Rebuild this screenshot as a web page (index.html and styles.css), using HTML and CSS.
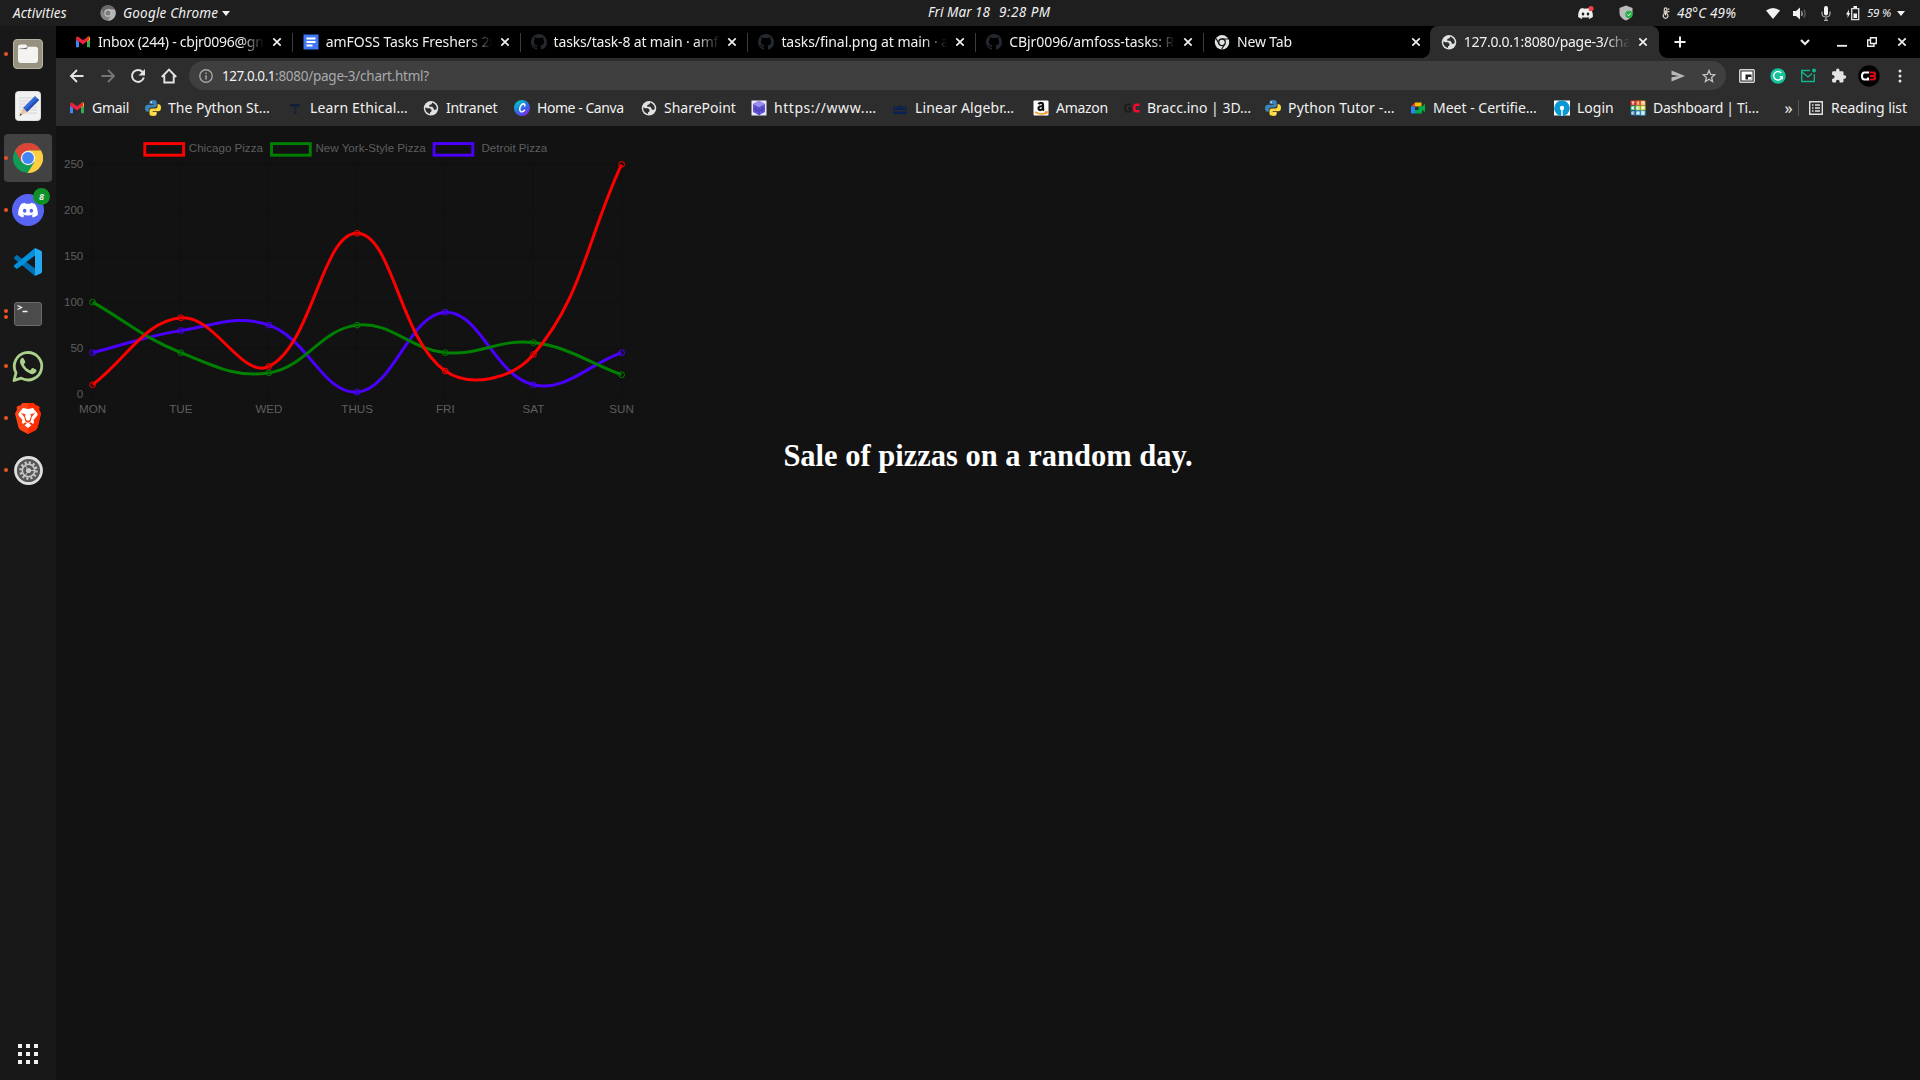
FILE: index.html
```html
<!DOCTYPE html>
<html lang="en">
<head>
<meta charset="utf-8">
<title>127.0.0.1:8080/page-3/chart.html</title>
<link rel="stylesheet" href="styles.css">
</head>
<body>
<svg class="sprite" aria-hidden="true">
  <symbol id="gmail" viewBox="0 0 16 16"><path fill="#4285f4" d="M1 4v9.200h3V7z"/><path fill="#34a853" d="M12 7v6.200h3V4z"/><path fill="#fbbc04" d="M12 4.300V8l3-2.300V4c0-1.600-1.600-2-2.600-1.100z"/><path fill="#c5221f" d="M1 4v1.700L4 8V4.200L3.500 2.900C2.400 2.100 1 2.600 1 4z"/><path fill="#ea233f" d="M3.500 2.900 8 6.300l4.500-3.400L14 3v2.700L8 10.500 2 6V3z"/></symbol>
  <symbol id="python" viewBox="0 0 16 16"><path fill="#3c84ba" d="M8 0C5 0 4.500 1 4.500 2.200V4h4v.7H2.600C1 4.700 0 6 0 8.200s1 3.600 2.500 3.600h1.300V9.700c0-1.200 1-2.200 2.300-2.200h3.800c1 0 1.800-.9 1.800-1.900V2.200C11.700.8 10.500 0 8 0z"/><path fill="#ffd83c" d="M8.200 16c3 0 3.500-1 3.500-2.200V12h-4v-.7h5.900C15.200 11.300 16 10 16 7.800s-.8-3.600-2.300-3.600h-1.200v2c0 1.300-1 2.300-2.200 2.300H6.400c-1.100 0-1.900.9-1.900 2v3.300C4.500 15.200 5.700 16 8.200 16z"/><circle cx="6.200" cy="2.200" r=".8" fill="#fff"/><circle cx="10" cy="13.800" r=".8" fill="#fff"/></symbol>
  <symbol id="globe" viewBox="0 0 16 16"><circle cx="8" cy="8.300" r="7.200" fill="#dfe1e3"/><path fill="#2d2d2d" d="M9.300 2.500 8.500 4.300 6.300 5v1.700h2.900l1.300 1.500.3 1.600h1.700l1.200-.8q.5-4.500-4.400-6.500zM2.400 7.300 2.300 9.600q.8 3.500 4.700 4.300v-1.500l1.500-1.200V9.700L7 8.300H4.300z"/></symbol>
  <symbol id="github" viewBox="0 0 16 16"><path fill="#24292f" d="M8 0C3.580 0 0 3.580 0 8c0 3.540 2.290 6.530 5.470 7.590.4.070.55-.17.55-.38 0-.19-.01-.82-.01-1.490-2.010.37-2.530-.49-2.690-.94-.09-.23-.48-.94-.82-1.130-.28-.15-.68-.52-.01-.53.63-.01 1.080.58 1.230.82.72 1.210 1.870.87 2.330.66.070-.52.28-.87.51-1.070-1.780-.2-3.640-.89-3.640-3.950 0-.87.31-1.590.82-2.150-.08-.2-.36-1.020.08-2.120 0 0 .67-.21 2.200.82a7.600 7.600 0 0 1 4 0c1.530-1.040 2.200-.82 2.200-.82.44 1.100.16 1.920.08 2.120.51.56.82 1.270.82 2.150 0 3.070-1.870 3.750-3.650 3.950.29.25.54.73.54 1.480 0 1.070-.01 1.930-.01 2.200 0 .21.15.46.55.38A8 8 0 0 0 16 8c0-4.420-3.580-8-8-8z"/></symbol>
  <symbol id="chromium" viewBox="0 0 16 16"><circle cx="8" cy="8.300" r="7.200" fill="#dfe1e3"/><circle cx="8" cy="8.300" r="3.300" fill="none" stroke="#161616" stroke-width="1.300"/><path fill="none" stroke="#161616" stroke-width="1.200" d="M8 5h6.500M5.200 10 2 4.500M10.800 10l-3.100 5.300"/></symbol>
  <symbol id="close" viewBox="0 0 10 10"><path fill="none" stroke="#f1f1f1" stroke-width="1.700" d="m1.300 1.300 7.400 7.400m0-7.400L1.300 8.700"/></symbol>
  <symbol id="discord" viewBox="0 0 24 18"><path fill="currentColor" d="M20.300 1.500A19 19 0 0 0 15.600 0l-.7 1.300a18 18 0 0 0-5.800 0L8.400 0a19 19 0 0 0-4.700 1.500C.7 6 0 10.300.3 14.600A20 20 0 0 0 6.100 17.600l1.400-2.200-2-1 .5-.4c3.800 1.800 8.200 1.800 12 0l.5.4-2 1 1.400 2.200a20 20 0 0 0 5.800-3c.5-5-.8-9.300-3.400-13.100zM8 12c-1.200 0-2.100-1.100-2.100-2.400S6.800 7.200 8 7.200s2.200 1.100 2.100 2.400C10.100 10.900 9.200 12 8 12zm8 0c-1.200 0-2.100-1.100-2.100-2.400s.9-2.400 2.100-2.400 2.200 1.100 2.100 2.400c0 1.300-.9 2.400-2.100 2.400z"/></symbol>
</svg>

<header class="topbar">
  <span class="activities">Activities</span>
  <svg class="appicon" viewBox="0 0 16 16"><circle cx="8" cy="8" r="7.700" fill="#858585"/><path fill="#6a6a6a" d="M1.300 4.200A7.700 7.700 0 0 1 14.700 4.200L8 4.500 4.700 10z"/><path fill="#b5b5b5" d="M8 4.500h6.900A7.700 7.700 0 0 1 8 15.700L11.300 10z"/><circle cx="8" cy="8" r="3.700" fill="#c9c9c9"/><circle cx="8" cy="8" r="2.600" fill="#7c7c7c"/></svg>
  <span class="appname">Google Chrome</span>
  <i class="caret"></i>
  <span class="clock"><span>Fri Mar 18</span><span class="time">9:28 PM</span></span>
  <div class="tray">
    <svg width="16" height="14" viewBox="0 0 16 14"><g color="#eee"><use href="#discord" y="1.500" width="15" height="12"/></g><circle cx="13" cy="2.600" r="2.600" fill="#ed4245"/></svg>
    <svg width="14" height="16" viewBox="0 0 14 16"><path fill="#b9bcbc" d="M7 .5 13.500 3v5c0 3.500-3 6-6.500 7.500C3.500 14 .5 11.500.5 8V3z"/><circle cx="10" cy="9.500" r="3.700" fill="#28b045"/><path fill="none" stroke="#fff" d="m8.300 9.500 1.300 1.300 2.200-2.400"/></svg>
    <svg width="8" height="12" viewBox="0 0 8 14"><path fill="none" stroke="#ddd5c8" stroke-width="1.400" d="M2 8V2.500a1.500 1.500 0 0 1 3 0V8a2.800 2.800 0 1 1-3 0zM3.500 4v6M6 2.500h2M6 5.500h2"/></svg>
    <span class="temp">48°C 49%</span>
    <svg width="16" height="13" viewBox="0 0 16 13"><path fill="#f2f2f2" d="M1 3.500Q8-1.500 15 3.500L8 12z"/></svg>
    <svg width="15" height="13" viewBox="0 0 15 13"><path fill="#f2f2f2" d="M1 4h3l4-3.500v12L4 9H1z"/><path fill="none" stroke="#aaa" stroke-width="1.200" d="M9.500 4q1.500 2.500 0 5"/><path fill="none" stroke="#666" stroke-width="1.200" d="M11.800 2.500q2.700 4 0 8"/></svg>
    <svg width="10" height="15" viewBox="0 0 10 15"><rect x="3" y="0" width="4" height="9.500" rx="2" fill="#f2f2f2"/><path fill="none" stroke="#aaa" stroke-width="1.200" d="M1 5.500V8q.5 3 4 3t4-3V5.500M5 11v3.500M3 14.400h4"/></svg>
    <svg width="14" height="15" viewBox="0 0 14 15"><path fill="#f2f2f2" d="M3 3.500 0 8.500h1.700L1.500 12l2.700-5H2.800z"/><path fill="none" stroke="#ddd" stroke-width="1.300" d="M5.700 2.700h7v11h-7z"/><path fill="#f2f2f2" d="M7.500 7.500h3.500V12H7.500zM7.500 0h3.500v2H7.500z"/></svg>
    <span class="battery">59 %</span>
    <i class="caret"></i>
  </div>
</header>

<div class="desktop">
  <nav class="dock">
    <div class="app running"><svg width="30" height="30" viewBox="0 0 30 30"><rect x=".5" y=".5" width="29" height="29" rx="3.500" fill="#979180" stroke="#b8b3a3"/><path fill="#f4f3f0" d="M5 8q0-2.500 2.500-2.500H13l1.500 2.300h8q2.500 0 2.500 2.500V21q0 3-3 3H8q-3 0-3-3z"/><path stroke="#d6d4ce" d="M5.500 10h8l1.500-1.500"/></svg></div>
    <div class="app"><svg width="26" height="30" viewBox="0 0 26 30"><rect x=".5" y=".5" width="25" height="29" rx="3" fill="#f1f1f2" stroke="#dcdcdc"/><path stroke="#d3d4d6" d="M4 7h18M4 10h18M4 13h18M4 16h18M4 19h18M4 22h18"/><path fill="#3468d4" d="m8 17 12-12 4 4-12 12z"/><path fill="#214bb0" d="m10.500 19.500 12-12L24 9 12 21z"/><path fill="#edc29a" d="m8 17 4 4-7.500 4z"/><path fill="#333" d="m5.500 22.500 1.500 1.300L4.500 25z"/></svg></div>
    <div class="app running focused"><svg width="30" height="30" viewBox="0 0 30 30"><circle cx="15" cy="15" r="15" fill="#109c58"/><path fill="#dc4437" d="M2 7.500a15 15 0 0 1 26 0H15v15z"/><path fill="#dc4437" d="M2 7.500 8.500 19 15 15V7.500z"/><path fill="#ffcd40" d="M15 7.500h13A15 15 0 0 1 14.500 30l7-11z"/><circle cx="15" cy="15" r="7.200" fill="#f1f1f1"/><circle cx="15" cy="15" r="5.900" fill="#4286f5"/></svg></div>
    <div class="app running"><svg width="32" height="32" viewBox="0 0 32 32" color="#fff"><circle cx="16" cy="16" r="16" fill="#5865f2"/><use href="#discord" x="6" y="8.500" width="20" height="15.500"/></svg><b class="badge">8</b></div>
    <div class="app"><svg width="28" height="28" viewBox="0 0 28 28"><path fill="#0070b4" d="M0 9.500 2 7.400q.8-.6 1.600 0L21 20.500V28L.5 11q-.8-.7-.5-1.500z"/><path fill="#0090dc" d="M0 18.500 2 20.600q.8.600 1.600 0L21 7.500V0L.5 17q-.8.700-.5 1.500z"/><path fill="#24a8f2" d="m21 0 6 2.800q1 .5 1 1.500v19.400q0 1-1 1.500L21 28z"/></svg></div>
    <div class="app running twice"><svg width="28" height="24" viewBox="0 0 28 24"><rect x=".5" y=".5" width="27" height="23" rx="2.500" fill="#4b4b4b" stroke="#6d6d6d"/><path fill="none" stroke="#f5f5f5" stroke-width="1.300" d="m3.500 3.500 4 2-4 2M8.500 9.500h5"/></svg></div>
    <div class="app running"><svg width="32" height="32" viewBox="0 0 32 32"><path fill="none" stroke="#aad08a" stroke-width="2.800" stroke-linejoin="round" d="m2 30.500 2-7.700a13.700 13.700 0 1 1 5.200 5.300z"/><path fill="#aad08a" d="M11.500 8.300q-.7-1-1.800-.2Q7 10.500 8.500 14q3.500 7.500 10.500 10 4 .8 5.500-2.700.3-1.200-.5-1.700l-3-1.500q-.8-.3-1.400.5l-1 1.300q-.5.600-1.300.2-3.500-1.500-5.300-5-.3-.7.200-1.200l1-1.300q.3-.5 0-1.200z"/></svg></div>
    <div class="app running"><svg width="26" height="31" viewBox="0 0 26 31"><path fill="#fb4316" d="M7.500 0h11l2.500 2.700q2-.5 3.500 1.500L24 6.500l2 4-3.300 13.500q-.7 2-2.300 3.200L13 31l-7.400-3.800Q4 26 3.300 24L0 10.500l2-4-.5-2.300Q3 2.200 5 2.700z"/><path fill="#ff2a00" d="M13 0h5.500L21 2.700q2-.5 3.500 1.500L24 6.500l2 4-3.300 13.500q-.7 2-2.300 3.200L13 31z"/><path fill="#fff" d="m8 5 5 1 5-1 4.500 5.500q.5 1.500-.7 2.700L18.500 17l.7 2-1.200 2-2.200-1.700-1.800 1.200 2.500 1.800L13 25l-3.500-2.700 2.500-1.800-1.800-1.200L8 21l-1.200-2 .7-2-3.300-3.800q-1.200-1.200-.7-2.700z"/><path fill="#fb4316" d="m6 10 4.700 1.200-.7 1.700 1.300 4 1.700.8 1.700-.8 1.300-4-.7-1.700L20 10l-3.200 4-1.200 4.500L13 20l-2.600-1.500L9.200 14z"/></svg></div>
    <div class="app running"><svg width="29" height="29" viewBox="0 0 29 29"><circle cx="14.500" cy="14.500" r="13" fill="#555" stroke="#dedede" stroke-width="2.800"/><circle cx="14.500" cy="14.500" r="8" fill="none" stroke="#c9c9c9" stroke-width="2.500" stroke-dasharray="2.100 2.090"/><circle cx="14.500" cy="14.500" r="6.200" fill="none" stroke="#c9c9c9" stroke-width="1.600"/><circle cx="14.500" cy="14.500" r="2.600" fill="#c9c9c9"/><path stroke="#c9c9c9" d="m11 9 2 3M11 20l2-3M17 14.500h3.500"/></svg></div>
    <svg class="grid" width="20" height="20" viewBox="0 0 20 20" fill="#f0f0f0"><path d="M0 0h4v4H0zM8 0h4v4H8zM16 0h4v4h-4zM0 8h4v4H0zM8 8h4v4H8zM16 8h4v4h-4zM0 16h4v4H0zM8 16h4v4H8zM16 16h4v4h-4z"/></svg>
  </nav>

  <main class="browser">
    <div class="tabs">
      <div class="tab inbox"><svg class="fav"><use href="#gmail"/></svg><span class="title">Inbox (244) - cbjr0096@gm</span><svg class="x"><use href="#close"/></svg></div>
      <div class="tab docs"><svg class="fav" viewBox="0 0 16 16"><path fill="#3f76f5" d="M.5.500h15v15H.5z"/><path stroke="#fff" stroke-width="1.800" d="M3.500 4.500h9M3.500 8h9M3.500 11.500h6"/></svg><span class="title">amFOSS Tasks Freshers 20</span><svg class="x"><use href="#close"/></svg></div>
      <div class="tab task"><svg class="fav"><use href="#github"/></svg><span class="title">tasks/task-8 at main · amf</span><svg class="x"><use href="#close"/></svg></div>
      <div class="tab final"><svg class="fav"><use href="#github"/></svg><span class="title">tasks/final.png at main · a</span><svg class="x"><use href="#close"/></svg></div>
      <div class="tab repo"><svg class="fav"><use href="#github"/></svg><span class="title">CBjr0096/amfoss-tasks: R</span><svg class="x"><use href="#close"/></svg></div>
      <div class="tab newtab"><svg class="fav"><use href="#chromium"/></svg><span class="title">New Tab</span><svg class="x"><use href="#close"/></svg></div>
      <div class="tab active"><svg class="fav"><use href="#globe"/></svg><span class="title">127.0.0.1:8080/page-3/cha</span><svg class="x"><use href="#close"/></svg></div>
      <svg class="plus" width="12" height="12" viewBox="0 0 12 12"><path stroke="#f1f1f1" stroke-width="2" d="M6 .5v11M.5 6h11"/></svg>
      <div class="winctl">
        <svg width="10" height="8" viewBox="0 0 10 8"><path fill="none" stroke="#f1f1f1" stroke-width="2" d="m1 2 4 4 4-4"/></svg>
        <svg width="10" height="10" viewBox="0 0 10 10"><path stroke="#f1f1f1" stroke-width="1.800" d="M0 8.800h10"/></svg>
        <svg width="10" height="10" viewBox="0 0 10 10"><path fill="none" stroke="#f1f1f1" stroke-width="1.400" d="M3.500.7h5.800v5.800H3.500zM3 3H.7v6.300H7V7"/></svg>
        <svg width="10" height="10"><use href="#close"/></svg>
      </div>
    </div>

    <div class="toolbar">
      <div class="nav">
        <svg width="16" height="16" viewBox="0 0 16 16"><path fill="none" stroke="#e3e3e3" stroke-width="1.900" d="M14.500 8H2.500M8 2 2 8l6 6"/></svg>
        <svg width="16" height="16" viewBox="0 0 16 16"><path fill="none" stroke="#767676" stroke-width="1.900" d="M1.500 8h12M8 2l6 6-6 6"/></svg>
        <svg width="16" height="16" viewBox="0 0 16 16"><path fill="none" stroke="#e3e3e3" stroke-width="2" d="M13.800 9.500A6 6 0 1 1 12.600 4"/><path fill="#e3e3e3" d="M15 1v6.500H8.500z"/></svg>
        <svg width="16" height="16" viewBox="0 0 16 16"><path fill="none" stroke="#e3e3e3" stroke-width="1.900" d="M.8 9 8 1.700 15.200 9M3.300 7.500v7h9.400v-7"/></svg>
      </div>
      <div class="omnibox">
        <svg width="14" height="14" viewBox="0 0 14 14"><circle cx="7" cy="7" r="6.200" fill="none" stroke="#a5a7aa" stroke-width="1.400"/><path stroke="#a5a7aa" stroke-width="1.500" d="M7 6.200v4.300M7 3.400v1.500"/></svg>
        <span class="url"><span class="host">127.0.0.1</span><span class="path">:8080/page-3/chart.html?</span></span>
        <svg width="14" height="12" viewBox="0 0 14 12"><path fill="#b8b8b8" d="M.5.500 14 6 .5 11.500V7.300L8 6 .5 4.700z"/></svg>
        <svg width="14" height="14" viewBox="0 0 14 14"><path fill="none" stroke="#c4c4c4" stroke-width="1.300" d="m7 1.500 1.600 3.900 4.200.3-3.200 2.700 1 4.200L7 10.300l-3.600 2.300 1-4.200L1.200 5.700l4.200-.3z"/></svg>
      </div>
      <div class="exts">
        <svg width="16" height="16" viewBox="0 0 16 16"><rect x=".7" y="1.700" width="14.600" height="12.600" rx="1" fill="#2d2d2d" stroke="#d2d2d2" stroke-width="1.400"/><path fill="#fff" d="M2.500 3.500h11v9h-11z"/><path fill="#222" d="M6.500 6.500h6v5h-6z"/><path fill="#fff" d="M9 9h3.500v2.500H9z"/></svg>
        <svg width="16" height="16" viewBox="0 0 16 16"><circle cx="8" cy="8" r="7.700" fill="#14c39a"/><path fill="none" stroke="#fff" stroke-width="1.400" d="M11.300 5A4.300 4.300 0 1 0 12 9.300M12.500 8.800H9.700M12.300 8.500v2.800"/></svg>
        <svg width="16" height="16" viewBox="0 0 16 16"><path fill="none" stroke="#13b78d" stroke-width="1.300" d="M10 2.500H1.700v11h12.600V6M2 4l6 5 4-3.400"/><circle cx="14" cy="2.400" r="2" fill="#13b78d"/></svg>
        <svg width="16" height="16" viewBox="0 0 16 16"><path fill="#e3e3e3" d="M13.500 7.300h-1V4.500q0-1.300-1.300-1.300H8.500v-1a1.700 1.700 0 0 0-3.400 0v1H2.400q-1.300 0-1.300 1.300V7h1a1.900 1.900 0 0 1 0 3.700h-1v2.600q0 1.300 1.300 1.300H5v-1a1.800 1.800 0 0 1 3.600 0v1h2.600q1.300 0 1.300-1.300v-2.600h1a1.700 1.700 0 0 0 0-3.400z"/></svg>
        <svg width="22" height="22" viewBox="0 0 22 22"><circle cx="11" cy="11" r="10.700" fill="#000"/><path fill="none" stroke="#fff" stroke-width="2" d="M11 7.500H6.500Q4 7.500 4 11t2.500 3.500H10v-2"/><path fill="none" stroke="#e00812" stroke-width="2.200" d="M11.500 7.500h4q1.700.3 1.500 1.800-.3 1.600-1.800 1.700H12h3.200q1.800.2 1.900 1.800-.1 1.500-1.600 1.700h-4"/></svg>
        <svg width="16" height="16" viewBox="0 0 16 16" fill="#e3e3e3"><circle cx="8" cy="3" r="1.500"/><circle cx="8" cy="8" r="1.500"/><circle cx="8" cy="13" r="1.500"/></svg>
      </div>
    </div>

    <div class="bookmarks">
      <a class="tight"><svg class="fav"><use href="#gmail"/></svg>Gmail</a>
      <a><svg class="fav"><use href="#python"/></svg>The Python St…</a>
      <a class="loose"><svg class="fav" viewBox="0 0 16 16"><path fill="#101e36" d="M3 4h10v2.500H3zM7 7.500h2.500v2H7zM7 11.500h2.500V14H7z"/></svg>Learn Ethical…</a>
      <a class="tight"><svg class="fav"><use href="#globe"/></svg>Intranet</a>
      <a class="tighter"><svg class="fav" viewBox="0 0 16 16"><defs><linearGradient id="cv" x1="0" y1="0" x2=".7" y2="1"><stop offset=".15" stop-color="#00c4cc"/><stop offset=".6" stop-color="#2f6be8"/><stop offset="1" stop-color="#7d2ae8"/></linearGradient></defs><circle cx="8" cy="8" r="8" fill="url(#cv)"/><path fill="none" stroke="#fff" stroke-width="1.400" d="M10.500 6.500q1-2.500-.8-2.700Q7 4 6 7.500t1.200 4.300q1.800.5 3.800-2"/></svg>Home - Canva</a>
      <a><svg class="fav"><use href="#globe"/></svg>SharePoint</a>
      <a class="widest"><svg class="fav" viewBox="0 0 16 16"><path fill="#ece9fb" d="M.5.500h15v15H.5z"/><path fill="#6559d8" d="m8 .8 6 3.200v8l-6 3.300L2 12V4z"/><path fill="#9a90ee" d="m8 .8 6 3.200-6 3.200L2 4z"/><path stroke="#3b2fa8" stroke-width=".7" d="M8 7v8M5 6v6M11 6v6M2.500 8l5 3M8.500 11l5-3" fill="none"/></svg>https://www.…</a>
      <a class="loose"><svg class="fav" viewBox="0 0 16 16"><path fill="#0a2253" d="M1 11.500h14V14H1zM1.500 6H3v2h1.500V6H6v2h1V5h2v3h1V6h1.500v2H13V6h1.500v4h-13z"/></svg>Linear Algebr…</a>
      <a class="tight"><svg class="fav" viewBox="0 0 16 16"><rect x=".5" y=".5" width="15" height="15" rx="1" fill="#fff"/><path fill="none" stroke="#111" stroke-width="2.200" d="M5.500 4.200q.7-1.400 2.500-1.300 2 0 2 2V9.500l1 1M10 6q-4.700 0-4.500 2.500.3 1.800 2.200 1.500Q9.500 9.600 10 8"/><path fill="none" stroke="#f7981d" stroke-width="1.500" d="M2 12q6 3.500 11 .8M11.800 12h2.300l-.6 2"/></svg>Amazon</a>
      <a><svg class="fav" viewBox="0 0 16 16"><path fill="none" stroke="#1b1b1b" stroke-width="1.700" d="M7 4.500H3Q1 4.500 1 8t2 3.700h3.500V8H4"/><path fill="none" stroke="#f50a30" stroke-width="2.500" d="M15.500 4.800h-3q-2.300 0-2.300 3.200t2.300 3.300h3"/></svg>Bracc.ino | 3D…</a>
      <a class="loose"><svg class="fav"><use href="#python"/></svg>Python Tutor -…</a>
      <a><svg class="fav" viewBox="0 0 16 16"><path fill="#ea4335" d="M1 6.500 5 2.500v4z"/><path fill="#fbbc04" d="M5 2.500h6.500v4H5z"/><path fill="#2684fc" d="M1 6.500h4v7H2q-1 0-1-1z"/><path fill="#00ac47" d="M5 10h3.500V6.500H12l3-2.700v8.500L12 10v3.500H5z"/></svg>Meet - Certifie…</a>
      <a><svg class="fav" viewBox="0 0 16 16"><path fill="#fff" d="M0 .5h16v15H0z"/><circle cx="8" cy="8.300" r="7.800" fill="#0c97d5"/><circle cx="8" cy="8" r="2.200" fill="#fff"/><path fill="#fff" d="M7.300 8h1.400v8H7.300z"/></svg>Login</a>
      <a class="tight"><svg class="fav" viewBox="0 0 16 16"><path fill="#e32a28" d="M.5.500h5v5h-5z"/><path fill="#f05a28" d="M5.500.500h5v5h-5z"/><path fill="#f88d2a" d="M10.500.500h5v5h-5z"/><path fill="#12a07a" d="M.5 5.500h5v5h-5z"/><path fill="#9ac93c" d="M5.500 5.500h5v5h-5z"/><path fill="#cfd62b" d="M10.500 5.500h5v5h-5z"/><path fill="#15559a" d="M.5 10.500h5v5h-5z"/><path fill="#1c8fd0" d="M5.500 10.500h5v5h-5z"/><path fill="#4bbbe8" d="M10.500 10.500h5v5h-5z"/><path fill="none" stroke="#fff" stroke-width="1.100" d="M1.500 2h3M3 2v2.700M8 1.500v3.200M12 4.700V2h2v2.700M2 6.500v3M4 6.500 2.500 8 4 9.500M9.500 7H7v2h2.500M12 9.500V7h2v1.300h-2M4.500 12H2v2h2.500M7 14.700V12h2v2.700M7 13.500h2M12 11.800v2.500h1.500q1-1.200 0-2.500z"/></svg>Dashboard | Ti…</a>
      <span class="more">»</span>
      <a class="reading"><svg width="14" height="14" viewBox="0 0 14 14"><path fill="none" stroke="#e3e3e3" stroke-width="1.400" d="M.7.700h12.600v12.600H.7zM3 4h1.500M3 7h1.500M3 10h1.500M6 4h5M6 7h5M6 10h5"/></svg>Reading list</a>
    </div>

    <section class="page">
      <svg id="chart" class="chart" width="600" height="300" viewBox="56 126 600 300"></svg>
      <h1>Sale of pizzas on a random day.</h1>
    </section>
  </main>
</div>
<script src="chart.js"></script>
</body>
</html>
```
FILE: styles.css
```css
* { box-sizing: border-box; }
body {
  margin: 0;
  width: 1920px;
  height: 1080px;
  overflow: hidden;
  display: flex;
  flex-direction: column;
  background: #121212;
  color: #f1f1f1;
  font: 14px/20px "Noto Sans", sans-serif;
  white-space: nowrap;
}
svg { display: block; flex: none; }
.sprite { display: none; }

.topbar {
  flex: none;
  height: 26px;
  padding: 0 15px 0 13px;
  display: flex;
  align-items: center;
  background: #1e1e1e;
  font-size: 13.500px;
  font-style: italic;
  letter-spacing: 0.18px;
}
.activities { width: 54px; margin-right: 33px; }
.appicon { width: 16px; height: 16px; margin-right: 7px; }
.appname { width: 95px; }
.caret {
  border: 4.500px solid transparent;
  border-top: 5px solid #f1f1f1;
  border-bottom: 0;
  margin-left: 4px;
}
.clock { margin-left: 698px; width: 125px; display: flex; gap: 9px; position: relative; top: -1px; letter-spacing: 0.05px; }
.time { letter-spacing: 0.45px; }
.tray { margin-left: auto; display: flex; align-items: center; }
.tray svg:nth-of-type(1) { margin-right: 25px; }
.tray svg:nth-of-type(2) { margin-right: 29px; }
.tray svg:nth-of-type(3) { margin-right: 7px; }
.temp { width: 59px; margin-right: 29px; }
.tray svg:nth-of-type(4) { margin-right: 11px; }
.tray svg:nth-of-type(5) { margin-right: 14px; }
.tray svg:nth-of-type(6) { margin-right: 15px; }
.tray svg:nth-of-type(7) { margin-right: 7px; }
.battery { width: 26px; font-size: 11.500px; letter-spacing: -0.25px; }

.desktop { flex: 1; display: flex; min-height: 0; }
.dock {
  width: 56px;
  padding: 4px 4px 16px;
  display: flex;
  flex-direction: column;
  align-items: center;
  gap: 4px;
  background: #181818;
}
.app {
  width: 48px;
  height: 48px;
  flex: none;
  display: grid;
  place-items: center;
  position: relative;
  border-radius: 4px;
}
.focused { background: #424242; }
.running::before {
  content: "";
  position: absolute;
  left: 0;
  top: 22px;
  width: 4px;
  height: 4px;
  border-radius: 50%;
  background: #e95420;
}
.twice::before { top: 19px; box-shadow: 0 6px #e95420; }
.badge {
  position: absolute;
  right: 2px;
  top: 2px;
  width: 17px;
  height: 17px;
  border-radius: 50%;
  background: #109128;
  font: italic bold 9px/17px "Noto Sans", sans-serif;
  text-align: center;
}
.grid { margin-top: auto; }

.browser { flex: 1; display: flex; flex-direction: column; min-width: 0; }
.tabs { height: 32px; padding-left: 8px; display: flex; align-items: center; background: #000; }
.tab {
  width: 227.800px;
  height: 32px;
  padding: 0 10px 0 11px;
  display: flex;
  align-items: center;
  position: relative;
}
.tab:nth-child(-n+5)::after {
  content: "";
  position: absolute;
  right: -1px;
  top: 7px;
  width: 1px;
  height: 19px;
  background: #3c3c3c;
}
.inbox { letter-spacing: -0.26px; }
.docs, .repo, .final { letter-spacing: -0.07px; }
.task { letter-spacing: -0.16px; }
.newtab { letter-spacing: -0.17px; }
.active { letter-spacing: -0.29px; }
.fav { width: 16px; height: 16px; margin-right: 7px; }
.title {
  width: 167px;
  overflow: hidden;
  -webkit-mask-image: linear-gradient(90deg, #000 142px, transparent 166px);
  mask-image: linear-gradient(90deg, #000 142px, transparent 166px);
}
.x { width: 10px; height: 10px; margin-left: 7px; }
.active { width: 229px; margin-left: -1px; background: #2d2d2d; border-radius: 8px 8px 0 0; }
.active::before, .active::after {
  content: "";
  position: absolute;
  bottom: 0;
  width: 8px;
  height: 8px;
  background: radial-gradient(circle at 0 0, transparent 7.500px, #2d2d2d 8px);
}
.active::before { left: -8px; }
.active::after { right: -8px; transform: scaleX(-1); }
.plus { margin-left: 15px; }
.winctl { margin-left: auto; padding-right: 13px; display: flex; align-items: center; gap: 20px; }
.winctl svg:first-child { margin-right: 7px; }

.toolbar { height: 35px; display: flex; align-items: center; background: #2d2d2d; }
.nav { width: 133px; padding-left: 13px; display: flex; gap: 14.500px; }
.omnibox {
  width: 1537px;
  height: 29px;
  padding: 0 10px;
  display: flex;
  align-items: center;
  border-radius: 15px;
  background: #3f3f3f;
  font-size: 13.500px;
}
.url { flex: 1; margin-left: 9px; display: flex; color: #a8aaac; }
.host { color: #f1f1f1; letter-spacing: -0.46px; }
.path { letter-spacing: -0.26px; }
.omnibox svg:last-child { margin-left: 17px; }
.exts { flex: 1; padding-left: 13px; display: flex; align-items: center; gap: 14.500px; }
.exts svg:nth-child(5) { margin: 0 -3px; }

.bookmarks {
  height: 33px;
  padding: 0 0 4px 13px;
  display: grid;
  grid-template-columns: 76px 142px 136px 91px 127px 110px 141px 141px 91px 141px 145px 144px 76px 142px 33px 1fr;
  align-items: center;
  background: #2d2d2d;
}
.bookmarks a { display: flex; align-items: center; }
.bookmarks .loose { letter-spacing: 0.16px; }
.bookmarks .widest { letter-spacing: 0.54px; }
.bookmarks .tight { letter-spacing: -0.28px; }
.bookmarks .tighter { letter-spacing: -0.45px; }
.more { text-align: center; font-size: 16px; }
.bookmarks .reading { border-left: 1px solid #555; height: 16px; padding-left: 10px; margin-left: -7px; gap: 8px; letter-spacing: -0.05px; }

.page { flex: 1; background: #121212; }
.chart text { font: 11.600px "Liberation Sans", Arial, sans-serif; fill: #5e5e5e; }
h1 {
  margin: 12px 0 0;
  text-align: center;
  color: #fff;
  font: bold 30.500px/37px "Liberation Serif", serif;
}
```
FILE: chart.js
```js
const days = ['MON', 'TUE', 'WED', 'THUS', 'FRI', 'SAT', 'SUN'];
const series = [
  { name: 'Detroit Pizza', color: '#4b00ff', data: [45, 69, 75, 2, 89, 10, 45], box: 434, label: 481.500 },
  { name: 'New York-Style Pizza', color: '#008000', data: [100, 45, 23, 75, 45, 56, 21], box: 271.500, label: 315.500 },
  { name: 'Chicago Pizza', color: '#ff0000', data: [10, 83, 30, 175, 25, 43, 250], box: 144.800, label: 188.800 }
];
const left = 92.600, right = 621.600, top_ = 164.400, bottom = 394, tension = 0.4;
const px = i => left + (right - left) * i / 6;
const py = v => bottom - (bottom - top_) * v / 250;
const clamp = y => Math.max(top_, Math.min(bottom, y));
let out = '';

for (let v = 0; v <= 250; v += 50) {
  out += `<path stroke="#101010" d="M85 ${py(v)}H${right}"/><text x="83.300" y="${py(v) + 3.5}" text-anchor="end">${v}</text>`;
}
days.forEach((d, i) => {
  out += `<path stroke="#101010" d="M${px(i)} ${top_}V402"/><text x="${px(i)}" y="413" text-anchor="middle">${d}</text>`;
});

// Bézier handles follow the neighbours of each point, scaled by the distance to them.
for (const s of series) {
  const p = s.data.map((v, i) => [px(i), py(v)]);
  const ctrl = p.map((c, i) => {
    const a = p[i - 1] || c, b = p[i + 1] || c;
    const d1 = Math.hypot(c[0] - a[0], c[1] - a[1]), d2 = Math.hypot(b[0] - c[0], b[1] - c[1]);
    const f1 = tension * d1 / (d1 + d2), f2 = tension * d2 / (d1 + d2);
    const dx = b[0] - a[0], dy = b[1] - a[1];
    return [[c[0] - f1 * dx, clamp(c[1] - f1 * dy)], [c[0] + f2 * dx, clamp(c[1] + f2 * dy)]];
  });
  let d = `M${p[0]}`;
  for (let i = 1; i < p.length; i++) d += `C${ctrl[i - 1][1]} ${ctrl[i][0]} ${p[i]}`;
  out += `<g fill="none" stroke="${s.color}"><path stroke-width="3" d="${d}"/>`;
  p.forEach(q => { out += `<circle cx="${q[0]}" cy="${q[1]}" r="2.900" fill="#000" fill-opacity=".1"/>`; });
  out += `<rect x="${s.box}" y="143.600" width="38.800" height="11.600" stroke-width="2.900"/></g>`;
  out += `<text x="${s.label}" y="152.300">${s.name}</text>`;
}
document.getElementById('chart').innerHTML = out;
```
